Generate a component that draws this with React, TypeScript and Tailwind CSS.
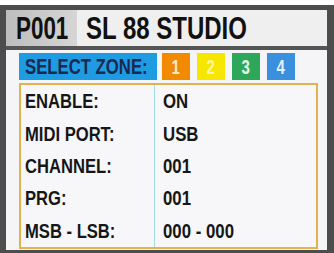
import React from "react";

const font = { fontFamily: '"Liberation Sans", Arial, sans-serif' };

const rows: [string, string][] = [
  ["ENABLE:", "ON"],
  ["MIDI PORT:", "USB"],
  ["CHANNEL:", "001"],
  ["PRG:", "001"],
  ["MSB - LSB:", "000 - 000"],
];

const zones = [
  { n: "1", bg: "bg-[#f28a00]", fg: "text-[#ffe9c8]" },
  { n: "2", bg: "bg-[#f7e600]", fg: "text-[#fff7a8]" },
  { n: "3", bg: "bg-[#2fa75a]", fg: "text-[#e2f5e6]" },
  { n: "4", bg: "bg-[#3a90dc]", fg: "text-[#e6f1fc]" },
];

export default function App() {
  return (
    <div className="w-[334px] h-[253px] bg-white pt-[5px] overflow-hidden" style={font}>
      <div className="h-[248px] flex flex-col border-[#4d4d4d] border-l-[6px] border-t-[5px] border-r-[7px] border-b-[3px] bg-[#f5f5f7]">
        <div className="h-[40px] flex shrink-0 border-b-[4px] border-[#555555] bg-[#efefef]">
          <div className="w-[71px] flex items-center pl-[10px] bg-gradient-to-r from-[#bdbdbd] to-[#d6d6d6] text-[32px] font-bold text-[#111] leading-none whitespace-nowrap">
            <span className="inline-block origin-left scale-x-[0.7]">P001</span>
          </div>
          <div className="flex items-center pl-[9px] text-[32px] font-bold text-[#111] leading-none whitespace-nowrap">
            <span className="inline-block origin-left scale-x-[0.75]">SL 88 STUDIO</span>
          </div>
        </div>
        <div className="flex flex-col pl-[13px] pr-[9px] pt-[3px]">
          <div className="flex h-[27px] gap-[5px]">
            <div className="w-[138px] bg-[#1f9be2] text-[#1b2850] font-bold text-[22px] flex items-center pl-[6px] leading-none whitespace-nowrap">
              <span className="inline-block origin-left scale-x-[0.76]">SELECT ZONE:</span>
            </div>
            <div className="flex gap-[7px]">
              {zones.map((z) => (
                <div key={z.n} className={`w-[28px] ${z.bg} ${z.fg} font-bold text-[20px] flex items-center justify-center leading-none`}>
                  <span className="inline-block scale-x-[0.75]">{z.n}</span>
                </div>
              ))}
            </div>
          </div>
          <div className="mt-[3px] h-[166px] w-[299px] border-[2px] border-[#e2b24c] bg-[#f7f7f9] flex flex-col">
            {rows.map(([l, v]) => (
              <div key={l} className="flex-1 flex items-center text-[20px] font-bold text-[#161616] leading-none whitespace-nowrap">
                <div className="w-[134px] h-full flex items-center pl-[4px] border-r border-[#a6d8e2]">
                  <span className="inline-block origin-left scale-x-[0.83]">{l}</span>
                </div>
                <div className="pl-[8px]">
                  <span className="inline-block origin-left scale-x-[0.84]">{v}</span>
                </div>
              </div>
            ))}
          </div>
        </div>
      </div>
    </div>
  );
}
